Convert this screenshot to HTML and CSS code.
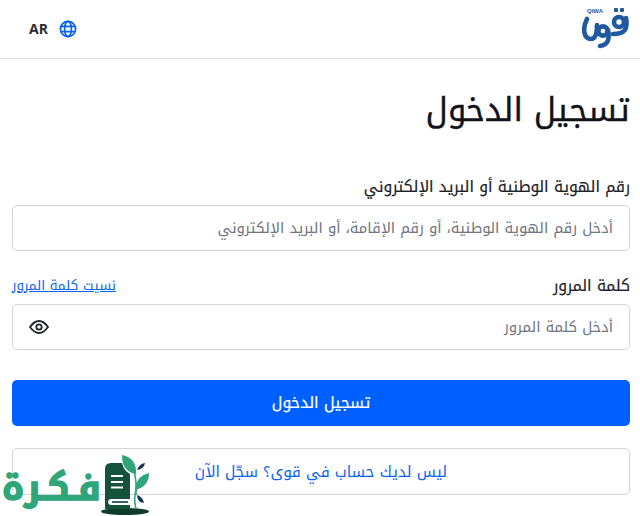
FILE: index.html
```html
<!DOCTYPE html>
<html lang="ar" dir="rtl">
<head>
<meta charset="utf-8">
<title>تسجيل الدخول</title>
<link rel="stylesheet" href="styles.css">
</head>
<body>
<header class="topbar">
  <svg class="logo" width="47" height="44" viewBox="0 0 47 44" aria-label="QIWA">
    <g fill="none" stroke="#1f5a9e" stroke-width="4.6" stroke-linecap="round">
      <path d="M5 14 C0 24 2 34 9 34 C14 34 15 28 15 20"/>
      <circle cx="21" cy="26" r="4.6"/>
      <path d="M26 25 C28 34 26 40 18 41"/>
      <circle cx="37" cy="17" r="5"/>
      <path d="M44 13 C46 24 43 29 31 29"/>
    </g>
    <rect x="32" y="3" width="4" height="4" rx="1" fill="#1f5a9e"/>
    <rect x="38" y="3" width="4" height="4" rx="1" fill="#1f5a9e"/>
    <text x="5" y="8" class="logo-text" direction="ltr">QIWA</text>
  </svg>
  <div class="lang">
    <svg width="18" height="18" viewBox="0 0 18 18" fill="none" stroke="#0b63f6" stroke-width="1.7">
      <circle cx="9" cy="9" r="7.6"/>
      <ellipse cx="9" cy="9" rx="3.4" ry="7.6"/>
      <path d="M1.8 6.4H16.2M1.8 11.6H16.2"/>
    </svg>
    <span class="lang-label">AR</span>
  </div>
</header>
<main class="content">
  <h1 class="title">تسجيل الدخول</h1>
  <div class="field field-id">
    <label class="label">رقم الهوية الوطنية أو البريد الإلكتروني</label>
    <div class="input"><span class="placeholder">أدخل رقم الهوية الوطنية، أو رقم الإقامة، أو البريد الإلكتروني</span></div>
  </div>
  <div class="field field-pass">
    <div class="label-row">
      <label class="label">كلمة المرور</label>
      <a class="forgot" href="#">نسيت كلمة المرور</a>
    </div>
    <div class="input input-pass">
      <span class="placeholder">أدخل كلمة المرور</span>
      <svg width="20" height="14" viewBox="0 0 20 14" fill="none" stroke="#1f2328" stroke-width="1.8">
        <path d="M1 7 C4 2.8 7 1 10 1 C13 1 16 2.8 19 7 C16 11.2 13 13 10 13 C7 13 4 11.2 1 7 Z"/>
        <circle cx="10" cy="7" r="2.7"/>
      </svg>
    </div>
  </div>
  <button class="primary">تسجيل الدخول</button>
  <a class="secondary" href="#">ليس لديك حساب في قوى؟ سجّل الآن</a>
</main>
<div class="watermark">
  <span class="watermark-text">فـكـرة</span>
  <svg class="watermark-logo" width="50" height="61" viewBox="0 0 50 61">
    <ellipse cx="24" cy="56.5" rx="24" ry="3.6" fill="#0f3b2c"/>
    <path d="M4 14 Q4 8 10 8 H21 Q23 16 29 19 V54 H4 Z" fill="#14523c"/>
    <path d="M10 21H22M10 27H22M10 32.5H22" stroke="#fff" stroke-width="2"/>
    <path d="M29 44 H9 Q5 47 9 50 H29 Z" fill="#fff"/>
    <path d="M11 47H27" stroke="#14364f" stroke-width="1.6"/>
    <path d="M35 54 Q32 42 36 32 Q38 28 41 26 M35 40 Q36 28 33 16" fill="none" stroke="#2fa67a" stroke-width="1.6"/>
    <path d="M21 0 Q36 3 35 19 Q21 17 21 0 Z" fill="#2fa67a"/>
    <path d="M34 35 Q35 21 48 18 Q48 32 34 35 Z" fill="#2fa67a"/>
    <path d="M36 15 Q38 9 44 8 Q43 14 36 15 Z" fill="#14364f"/>
    <path d="M36 40 Q42 42 43 48 Q36 47 36 40 Z" fill="#14364f"/>
  </svg>
</div>
</body>
</html>
```
FILE: styles.css
```css
* { box-sizing: border-box; }
html, body { margin: 0; padding: 0; height: 516px; overflow: hidden; }
body {
  position: relative;
  background: #fff;
  font-family: "Noto Kufi Arabic", Inter, sans-serif;
  color: #14181f;
}
.topbar {
  height: 59px;
  border-bottom: 1px solid #e4e5e7;
  display: flex;
  justify-content: space-between;
  align-items: flex-start;
  padding: 5px 11px 0 29px;
}
.logo { flex: none; }
.logo-text { font: 700 6px "Liberation Sans", sans-serif; fill: #1f5a9e; }
.lang {
  display: flex;
  align-items: center;
  gap: 11px;
  margin-top: 14px;
}
.lang-label { font: 700 14px "Open Sans", "Liberation Sans", sans-serif; color: #2a2d33; }
.content { padding: 0 10px 0 12px; display: flex; flex-direction: column; }
.title { margin: 29px 0 0; font-size: 32.5px; font-weight: 400; line-height: 44px; height: 44px; color: #111318; -webkit-text-stroke: .4px #111318; }
.field-id { margin-top: 41px; }
.field-pass { margin-top: 21px; }
.label { display: block; font-size: 15.6px; line-height: 26px; height: 26px; padding-top: 1px; color: #1d2128; -webkit-text-stroke: .2px #1d2128; }
.label-row { display: flex; justify-content: space-between; align-items: center; }
.forgot { font-size: 13.5px; margin-left: -1px; padding-left: 1px; color: #0b63f6; text-decoration: underline; }
.input {
  margin-top: 6px;
  height: 46px;
  border: 1px solid #d3d5d9;
  border-radius: 5px;
  padding: 0 16px;
  display: flex;
  align-items: center;
  justify-content: space-between;
  background: #fff;
}
.placeholder { font-size: 14.9px; color: #6f7680; }
.primary {
  margin-top: 30px;
  height: 46px;
  border: 0;
  border-radius: 5px;
  background: #0060ff;
  color: #fff;
  font: 400 15.7px "Noto Kufi Arabic", Inter, sans-serif;
  -webkit-text-stroke: .2px #fff;
}
.secondary {
  margin-top: 22px;
  height: 47px;
  border: 1px solid #d3d5d9;
  border-radius: 5px;
  display: flex;
  align-items: center;
  justify-content: center;
  font-size: 15.3px;
  color: #0b63f6;
  text-decoration: none;
}
.watermark {
  position: absolute;
  left: 2px;
  top: 455px;
  display: flex;
  direction: ltr;
  align-items: flex-start;
  gap: 0;
}
.watermark-text {
  width: 99px;
  margin-top: 8px;
  font: 700 36px/50px "Noto Kufi Arabic", Inter, sans-serif;
  color: #2fa67a;
  -webkit-text-stroke: 1.4px #2fa67a;
  direction: rtl;
  white-space: nowrap;
  text-align: right;
}
.watermark-logo { flex: none; }
```
